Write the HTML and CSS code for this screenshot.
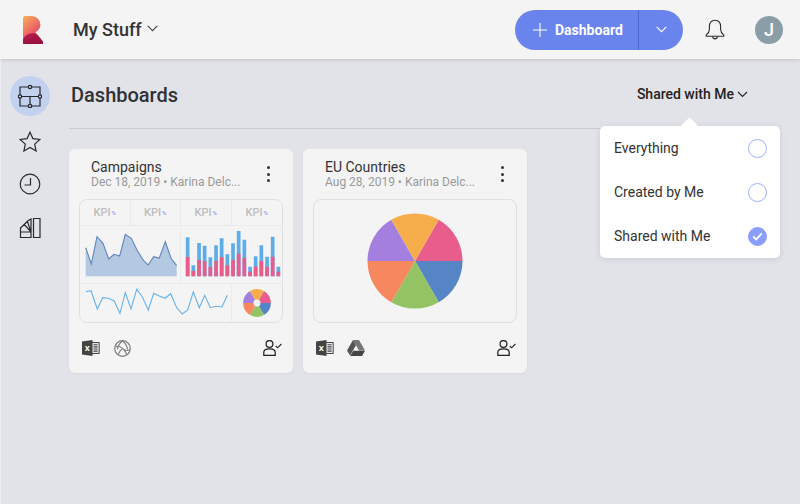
FILE: index.html
```html
<!DOCTYPE html>
<html lang="en">
<head>
<meta charset="utf-8">
<title>My Stuff - Dashboards</title>
<link rel="stylesheet" href="styles.css">
</head>
<body>
<svg class="defs" width="0" height="0" aria-hidden="true">
  <defs>
    <linearGradient id="logoGrad" x1="0.2" y1="0" x2="0.7" y2="0.8">
      <stop offset="0" stop-color="#f5a65a"/>
      <stop offset="1" stop-color="#e53a6c"/>
    </linearGradient>
    <linearGradient id="logoDark" x1="0" y1="0" x2="0.6" y2="1">
      <stop offset="0" stop-color="#b81c50"/>
      <stop offset="1" stop-color="#98103f"/>
    </linearGradient>
    <symbol id="pie" viewBox="-48 -48 96 96">
      <path fill="#e85d8c" d="M0 0 23.75-41.14A47.5 47.5 0 0 1 47.5 0Z"/>
      <path fill="#5585c5" d="M0 0H47.5A47.5 47.5 0 0 1 23.75 41.14Z"/>
      <path fill="#94c364" d="M0 0 23.75 41.14A47.5 47.5 0 0 1-23.75 41.14Z"/>
      <path fill="#f7875f" d="M0 0-23.75 41.14A47.5 47.5 0 0 1-47.5 0Z"/>
      <path fill="#a47fdf" d="M0 0H-47.5A47.5 47.5 0 0 1-23.75-41.14Z"/>
      <path fill="#f5ae4b" d="M0 0-23.75-41.14A47.5 47.5 0 0 1 23.75-41.14Z"/>
    </symbol>
    <symbol id="excel" viewBox="0 0 18 16">
      <path fill="#e8e8e8" stroke="#444" d="M9 2.5H17.2V13.5H9Z"/>
      <path fill="none" stroke="#444" stroke-width="1.1" d="M11.5 4.8H15.6M11.5 6.9H15.6M11.5 9H15.6M11.5 11.1H15.6"/>
      <path fill="#444" d="M0 1.6 10.5 0V16L0 14.4Z"/>
      <text class="xl-mark" x="5.2" y="11">X</text>
    </symbol>
    <symbol id="usercheck" viewBox="0 0 19 16">
      <circle cx="6.5" cy="4" r="3.4" fill="none" stroke="#222" stroke-width="1.25"/>
      <path fill="none" stroke="#222" stroke-width="1.25" d="M.8 15.4V12.2C.8 10 3 8.8 6.5 8.8S12.2 10 12.2 12.2V15.4Z"/>
      <path fill="none" stroke="#222" stroke-width="1.1" d="M12.8 6 14.6 7.8 18.4 4"/>
    </symbol>
  </defs>
</svg>

<header class="topbar">
  <svg class="logo" viewBox="0 0 20 28" width="20" height="28">
    <path fill="url(#logoGrad)" d="M2.5 0H8.8A8.6 8.6 0 0 1 17.4 8.6C17.4 12 15.5 14.6 12.5 16.3L20 26V28H0V2.5A2.5 2.5 0 0 1 2.5 0Z"/>
    <path fill="url(#logoDark)" d="M0 24C1 20 5 17.2 10 17.2C12 17.2 13.4 17.8 14.6 19L20 25.6V26.6A1.4 1.4 0 0 1 18.6 28H1A1 1 0 0 1 0 27Z"/>
  </svg>
  <div class="workspace">
    <span class="workspace-name">My Stuff</span>
    <svg class="chev" viewBox="0 0 11 7" width="11" height="7"><path d="M.7.8 5.5 5.6 10.3.8"/></svg>
  </div>
  <div class="split-btn">
    <div class="split-main">
      <svg class="plus" viewBox="0 0 14 14" width="14" height="14"><path d="M7 0V14M0 7H14"/></svg>
      <span>Dashboard</span>
    </div>
    <div class="split-caret">
      <svg class="chev chev-light" viewBox="0 0 11 7" width="11" height="7"><path d="M.7.8 5.5 5.6 10.3.8"/></svg>
    </div>
  </div>
  <svg class="bell" viewBox="0 0 20 21" width="20" height="21">
    <path d="M10 1.2C6.4 1.2 4.4 3.8 4.4 7.4V10.6C4.4 13.2 2.8 14.8 1.2 16.2V17.2H18.8V16.2C17.2 14.8 15.6 13.2 15.6 10.6V7.4C15.6 3.8 13.6 1.2 10 1.2Z"/>
    <path d="M7.6 17.4C7.8 19 8.8 19.9 10 19.9S12.2 19 12.4 17.4"/>
  </svg>
  <div class="avatar">J</div>
</header>

<div class="body-row">
  <nav class="sidenav">
    <div class="nav-item nav-active">
      <svg class="nav-icon" viewBox="0 0 24 24" width="24" height="24">
        <path d="M2 3H22V22H2ZM2 12.5H22M12 12.5V22"/>
        <circle cx="12" cy="3" r="1.7"/><circle cx="2" cy="12.5" r="1.7"/><circle cx="22" cy="12.5" r="1.7"/><circle cx="12" cy="22" r="1.7"/>
      </svg>
    </div>
    <div class="nav-item">
      <svg class="nav-icon nav-star" viewBox="0 0 22 21" width="22" height="21">
        <path d="M11 1.2 13.9 7.6 20.9 8.4 15.7 13.1 17.1 20 11 16.5 4.9 20 6.3 13.1 1.1 8.4 8.1 7.6Z"/>
      </svg>
    </div>
    <div class="nav-item">
      <svg class="nav-icon" viewBox="0 0 22 22" width="22" height="22">
        <circle cx="11" cy="11" r="9.8"/><path d="M11.5 5V12H5.5"/>
      </svg>
    </div>
    <div class="nav-item">
      <svg class="nav-icon" viewBox="0 0 22 22" width="22" height="22">
        <path d="M14.5 1.5H21V20.5H14.5ZM1.5 15H12V20.5H1.5ZM1.5 15 1.5 11 9 3.8 12 2V15ZM12 15 5.2 7.4M12 15 8.4 4.4"/>
      </svg>
    </div>
  </nav>

  <main class="content">
    <div class="title-row">
      <h1 class="page-title">Dashboards</h1>
      <div class="filter">
        <span>Shared with Me</span>
        <svg class="chev chev-dark" viewBox="0 0 11 7" width="11" height="7"><path d="M1 1 5.5 5.5 10 1"/></svg>
      </div>
    </div>

    <div class="cards">
      <article class="card">
        <div class="card-head">
          <div class="card-text">
            <div class="card-title">Campaigns</div>
            <div class="card-meta">Dec 18, 2019 • Karina Delc...</div>
          </div>
          <div class="kebab"><i></i><i></i><i></i></div>
        </div>
        <div class="preview preview-grid">
          <div class="cell kpi">KPI<span class="pct">%</span></div>
          <div class="cell kpi">KPI<span class="pct">%</span></div>
          <div class="cell kpi">KPI<span class="pct">%</span></div>
          <div class="cell kpi cell-last">KPI<span class="pct">%</span></div>
          <div class="cell span2 row2">
            <svg class="mini" viewBox="0 0 101 57" width="101" height="57">
              <path fill="#b5c8e2" d="M5.7 21.7 11.3 38 17 10.7 23 17.3 28.7 33 34 28.3 39.7 30 45.3 8.3 51.3 12.3 57 24 63 34 68 39 73.7 30.7 79.3 32 85.3 15.7 91 32.3 96.7 39.7V50.3H5.7Z"/>
              <path fill="none" stroke="#5f86bd" stroke-width="1.1" d="M5.7 21.7 11.3 38 17 10.7 23 17.3 28.7 33 34 28.3 39.7 30 45.3 8.3 51.3 12.3 57 24 63 34 68 39 73.7 30.7 79.3 32 85.3 15.7 91 32.3 96.7 39.7"/>
            </svg>
          </div>
          <div class="cell span2 row2 cell-last">
            <svg class="mini" viewBox="0 0 101 57" width="101" height="57">
              <path fill="#5dade8" d="M4.8 11.3h3.7v39h-3.7zM10.5 39.3h3.7v11h-3.7zM16.2 17h3.7v33.3h-3.7zM21.8 19.7h3.7v30.6h-3.7zM27.5 31.3h3.7v19h-3.7zM33.2 19.3h3.7v31h-3.7zM38.8 12.3h3.7v38h-3.7zM44.5 28.3h3.7v22h-3.7zM50.2 17.3h3.7v33h-3.7zM55.8 5h3.7v45.3h-3.7zM61.5 13.7h3.7v36.6h-3.7zM67.2 40.7h3.7v9.6h-3.7zM72.8 30.3h3.7v20h-3.7zM78.5 19.3h3.7v31h-3.7zM84.2 30.7h3.7v19.6h-3.7zM89.8 10.7h3.7v39.6h-3.7zM95.5 40.7h3.7v9.6h-3.7z"/>
              <path fill="#e85d8c" d="M4.8 31h3.7v19.3h-3.7zM10.5 45h3.7v5.3h-3.7zM16.2 34h3.7v16.3h-3.7zM21.8 35.3h3.7v15h-3.7zM27.5 41h3.7v9.3h-3.7zM33.2 35h3.7v15.3h-3.7zM38.8 31.3h3.7v19h-3.7zM44.5 39.3h3.7v11h-3.7zM50.2 34h3.7v16.3h-3.7zM55.8 27.7h3.7v22.6h-3.7zM61.5 32h3.7v18.3h-3.7zM67.2 45.7h3.7v4.6h-3.7zM72.8 40.7h3.7v9.6h-3.7zM78.5 35h3.7v15.3h-3.7zM84.2 40.7h3.7v9.6h-3.7zM89.8 30.7h3.7v19.6h-3.7zM95.5 45.7h3.7v4.6h-3.7z"/>
            </svg>
          </div>
          <div class="cell span3 row3">
            <svg class="mini" viewBox="0 0 151 38" width="151" height="38">
              <path fill="none" stroke="#68b2ec" stroke-width="1.1" d="M6 7.7 11 6.7 17.3 25 22.7 13.7 28.3 14.3 34 16.7 40 29.3 45.3 8.7 51 25 56.7 5.3 62.3 12.7 68.3 26 73.7 9.3 79.3 12 85 14.3 90.7 9.7 96.7 23.7 102.3 30 107.7 26 113.3 8 119.3 23.7 124.7 11.3 130.3 23.7 136 22.3 142 23 147.3 11.3"/>
            </svg>
          </div>
          <div class="cell row3 cell-last mini-pie">
            <svg viewBox="-14 -14 28 28" width="28" height="28">
              <use href="#pie" x="-14" y="-14" width="28" height="28"/>
              <circle r="3.5" fill="#f4f4f4"/>
            </svg>
          </div>
        </div>
        <div class="card-foot">
          <svg class="src" width="18" height="16"><use href="#excel"/></svg>
          <svg class="src src-gap src-globe" viewBox="0 0 17 17" width="17" height="17">
            <circle cx="8.5" cy="8.5" r="7.8" fill="#f4f4f4" stroke="#808080" stroke-width="1.2"/>
            <path fill="none" stroke="#808080" stroke-width="1.1" d="M8.5 .8C5.8 3 4.2 5.2 3.4 9.4M8.5 .8C11.2 3 12.8 5.2 13.6 9.4M1 7.2C3.2 5.6 5.4 5.6 8.5 8.4S13.8 11 16 9.4M4.2 14.6C5.2 11.6 6.7 9.9 8.5 8.4M12.8 14.6C11.8 11.6 10.3 9.9 8.5 8.4"/>
          </svg>
          <svg class="owner" width="19" height="16"><use href="#usercheck"/></svg>
        </div>
      </article>

      <article class="card">
        <div class="card-head">
          <div class="card-text">
            <div class="card-title">EU Countries</div>
            <div class="card-meta">Aug 28, 2019 • Karina Delc...</div>
          </div>
          <div class="kebab"><i></i><i></i><i></i></div>
        </div>
        <div class="preview preview-pie">
          <svg width="96" height="96"><use href="#pie"/></svg>
        </div>
        <div class="card-foot">
          <svg class="src" width="18" height="16"><use href="#excel"/></svg>
          <svg class="src src-gap" viewBox="0 0 18 16" width="18" height="16">
            <path fill="#777" d="M6 0H12L18 10.4H12Z"/>
            <path fill="#555" d="M6 0 9 5.2 3 15.6 0 10.4Z"/>
            <path fill="#444" d="M3.2 16 6.2 10.8H18L15 16Z"/>
          </svg>
          <svg class="owner" width="19" height="16"><use href="#usercheck"/></svg>
        </div>
      </article>
    </div>

    <div class="menu">
      <div class="menu-arrow"></div>
      <div class="menu-row"><span>Everything</span><span class="radio"></span></div>
      <div class="menu-row"><span>Created by Me</span><span class="radio"></span></div>
      <div class="menu-row"><span>Shared with Me</span>
        <span class="radio radio-on">
          <svg viewBox="0 0 12 10" width="11" height="9"><path d="M1.2 5 4.6 8.2 10.8 1.6"/></svg>
        </span>
      </div>
    </div>
  </main>
</div>
</body>
</html>
```
FILE: styles.css
```css
* { box-sizing: border-box; }
html, body { margin: 0; padding: 0; }
body {
  width: 800px;
  height: 504px;
  overflow: hidden;
  background: #e2e3e8;
  box-shadow: inset 1px 0 0 #eceDF0;
  font-family: Roboto, "Liberation Sans", sans-serif;
  color: #2b2b2b;
  display: flex;
  flex-direction: column;
}
.defs { position: absolute; }

.topbar {
  height: 59px;
  flex: none;
  background: #f4f4f4;
  box-shadow: 0 1px 3px rgba(0,0,0,.14);
  display: flex;
  align-items: center;
  padding-left: 23px;
  position: relative;
  z-index: 2;
}
.logo { flex: none; }
.workspace { display: flex; align-items: center; margin-left: 30px; }
.workspace-name { font-size: 18px; font-weight: 500; color: #333; }
.chev { fill: none; stroke: #444; stroke-width: 1.1; }
.workspace .chev { margin-left: 5px; margin-top: -2px; }
.split-btn {
  margin-left: auto;
  height: 40px;
  width: 168px;
  border-radius: 20px;
  background: #6a84ee;
  display: flex;
  color: #fff;
}
.split-main {
  width: 124px;
  display: flex;
  align-items: center;
  padding-left: 18px;
  border-right: 1px solid #4f68cf;
  font-size: 14px;
  font-weight: 700;
}
.split-main span { margin-left: 8px; }
.plus { fill: none; stroke: #fff; stroke-width: 1.1; }
.split-caret { flex: 1; display: flex; align-items: center; justify-content: center; }
.chev-light { stroke: #fff; }
.bell { margin-left: 22px; fill: none; stroke: #2b2b2b; stroke-width: 1.1; }
.avatar {
  width: 28px;
  height: 28px;
  border-radius: 50%;
  margin-left: 30px;
  margin-right: 17px;
  background: #8a9ea8;
  color: #fff;
  font-size: 18px;
  font-weight: 500;
  display: flex;
  align-items: center;
  justify-content: center;
}

.body-row { flex: 1; display: flex; position: relative; }
.sidenav { width: 60px; flex: none; padding-top: 15px; display: flex; flex-direction: column; align-items: center; }
.nav-item { width: 40px; height: 44px; display: flex; align-items: center; justify-content: center; position: relative; }
.nav-active::before {
  content: "";
  position: absolute;
  left: 0;
  top: 2px;
  width: 40px;
  height: 40px;
  border-radius: 50%;
  background: #c2d1ee;
}
.nav-icon { fill: none; stroke: #26282c; stroke-width: 1.2; position: relative; }
.nav-active circle { fill: #c2d1ee; }
.nav-star { margin-top: 2px; }

.content { flex: 1; padding-left: 9px; padding-right: 20px; position: relative; }
.title-row {
  height: 70px;
  border-bottom: 1px solid #c9cbd0;
  display: flex;
  align-items: center;
  justify-content: space-between;
  padding: 0 32px 0 2px;
}
.page-title { margin: 3px 0 0; font-size: 20px; font-weight: 500; color: #2f3136; }
.filter { display: flex; align-items: center; font-size: 14px; font-weight: 500; color: #222; margin-top: 1px; padding-left: 1px; }
.chev-dark { margin-left: 3px; stroke: #222; }

.cards { display: flex; gap: 10px; margin-top: 20px; }
.card {
  width: 224px;
  height: 224px;
  background: #f4f4f4;
  border-radius: 6px;
  padding: 0 10px;
  display: flex;
  flex-direction: column;
  box-shadow: 0 1px 2px rgba(0,0,0,.05);
}
.card-head { height: 50px; padding: 11px 0 0 12px; display: flex; justify-content: space-between; }
.card-title { font-size: 14px; line-height: 15px; color: #333; }
.card-meta { font-size: 12px; line-height: 15px; color: #9a9a9a; }
.kebab { width: 18px; margin-right: 6px; padding-top: 6px; display: flex; flex-direction: column; align-items: center; gap: 3.5px; }
.kebab i { width: 3px; height: 3px; border-radius: 50%; background: #333; display: block; }

.preview { width: 204px; height: 124px; border: 1px solid #e0e0e2; border-radius: 8px; flex: none; }
.preview-pie { display: flex; align-items: center; justify-content: center; }
.preview-grid { display: grid; grid-template-columns: repeat(4, 1fr); grid-template-rows: 26px 58px 38px; overflow: hidden; }
.cell { border-right: 1px solid #ebebec; border-bottom: 1px solid #ebebec; min-width: 0; }
.cell-last { border-right: 0; }
.row3 { border-bottom: 0; }
.span2 { grid-column: span 2; }
.span3 { grid-column: span 3; }
.kpi { display: flex; align-items: center; justify-content: center; font-size: 11px; font-weight: 500; color: #bdbdbd; }
.pct { font-size: 6px; font-weight: 700; color: #97a7ee; margin-left: 1px; }
.mini { display: block; }
.mini-pie { display: flex; align-items: center; justify-content: center; }

.card-foot { display: flex; align-items: center; height: 50px; padding-left: 3px; }
.src { display: block; }
.src-gap { margin-left: 13px; }
.src-globe { margin-left: 14px; }
.xl-mark { font-family: Roboto, "Liberation Sans", sans-serif; font-size: 8px; font-weight: 700; fill: #fff; text-anchor: middle; }
.owner { margin-left: auto; margin-right: 1px; }

.menu {
  position: absolute;
  left: 540px;
  top: 67px;
  width: 180px;
  background: #fff;
  border-radius: 5px;
  box-shadow: 0 1px 6px rgba(0,0,0,.1);
  z-index: 3;
}
.menu-arrow {
  position: absolute;
  left: 83px;
  top: -6px;
  width: 13px;
  height: 13px;
  background: #fff;
  transform: rotate(45deg);
  border-radius: 2px;
}
.menu-row {
  height: 44px;
  padding: 0 13px 0 14px;
  display: flex;
  align-items: center;
  justify-content: space-between;
  font-size: 14px;
  color: #333;
  position: relative;
}
.radio { width: 19px; height: 19px; border-radius: 50%; border: 1.5px solid #9db2ff; display: block; }
.radio-on { background: #8a9ffa; border-color: #8a9ffa; display: flex; align-items: center; justify-content: center; }
.radio-on svg { fill: none; stroke: #fff; stroke-width: 2; }
```
